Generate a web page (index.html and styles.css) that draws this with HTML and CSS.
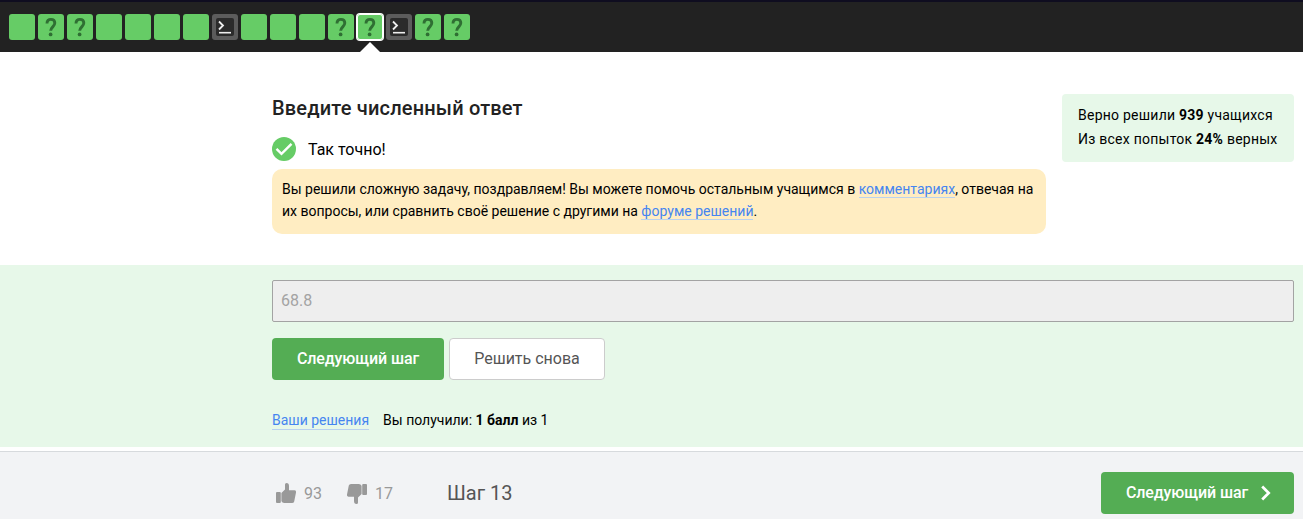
FILE: index.html
```html
<!DOCTYPE html>
<html lang="ru">
<head>
<meta charset="utf-8">
<title>Шаг 13</title>
<link rel="stylesheet" href="styles.css">
</head>
<body>
<svg class="defs" width="0" height="0" aria-hidden="true">
  <symbol id="quiz" viewBox="0 0 26 26"><path d="M9 9.400C9 6.700 10.500 5.400 12.900 5.400c2.500 0 3.900 1.400 3.900 3.700 0 3.500-4.100 4.100-4.100 7.700" fill="none" stroke="#2f6f33" stroke-width="2.900"/><circle cx="12.600" cy="20.400" r="1.850" fill="#2f6f33"/></symbol>
  <symbol id="term" viewBox="0 0 26 26"><rect x="4" y="4" width="18" height="18" rx="2" fill="#2b2b2b"/><path d="M7 7.500l4 4-4 4" fill="none" stroke="#eee" stroke-width="1.800"/><path d="M7 18.700h12" stroke="#eee" stroke-width="1.600"/></symbol>
  <symbol id="thumb" viewBox="0 0 20 20"><rect x="0" y="9" width="4.800" height="11" rx="1"/><path d="M5.400 10L9 6.500V1.500Q9 0 10.500 0Q13 .2 13 3V7.300H18.500Q20.300 7.500 20 9.500L18.200 18.500Q17.800 20 16 20H8Q5.600 19.700 5.400 18Z"/></symbol>
</svg>
<nav class="steps">
  <a class="step"></a>
  <a class="step"><svg><use href="#quiz"/></svg></a>
  <a class="step"><svg><use href="#quiz"/></svg></a>
  <a class="step"></a>
  <a class="step"></a>
  <a class="step"></a>
  <a class="step"></a>
  <a class="step code"><svg><use href="#term"/></svg></a>
  <a class="step"></a>
  <a class="step"></a>
  <a class="step"></a>
  <a class="step"><svg><use href="#quiz"/></svg></a>
  <a class="step active"><svg><use href="#quiz"/></svg></a>
  <a class="step code"><svg><use href="#term"/></svg></a>
  <a class="step"><svg><use href="#quiz"/></svg></a>
  <a class="step"><svg><use href="#quiz"/></svg></a>
</nav>
<main class="task">
  <section class="feedback">
    <h1 class="title">Введите численный ответ</h1>
    <div class="status">
      <svg width="24" height="24" viewBox="0 0 24 24"><circle cx="12" cy="12" r="12" fill="#66cc66"/><path d="M4.500 11.800l5 5L19.500 6.800" fill="none" stroke="#fff" stroke-width="2.400"/></svg>
      <span class="verdict">Так точно!</span>
    </div>
    <p class="hint"><span class="line">Вы решили сложную задачу, поздравляем! Вы можете помочь остальным учащимся в <a class="link">комментариях</a>, отвечая на</span> <span class="line">их вопросы, или сравнить своё решение с другими на <a class="link">форуме решений</a>.</span></p>
  </section>
  <aside class="stats">
    <div class="stat">Верно решили <b>939</b> учащихся</div>
    <div class="stat">Из всех попыток <b>24%</b> верных</div>
  </aside>
</main>
<section class="answer">
  <div class="field">68.8</div>
  <div class="actions">
    <button class="btn primary">Следующий шаг</button>
    <button class="btn again">Решить снова</button>
  </div>
  <div class="result"><a class="link">Ваши решения</a><span class="score">Вы получили: <b>1 балл</b> из 1</span></div>
</section>
<footer class="footer">
  <div class="vote up"><svg width="20" height="20"><use href="#thumb"/></svg><span>93</span></div>
  <div class="vote down"><svg width="20" height="20"><use href="#thumb"/></svg><span>17</span></div>
  <div class="position">Шаг 13</div>
  <button class="btn primary next"><span>Следующий шаг</span><svg width="10" height="16" viewBox="0 0 10 16"><path d="M1.200 1.500L7.700 8l-6.500 6.500" fill="none" stroke="#fff" stroke-width="2.700"/></svg></button>
</footer>
</body>
</html>
```
FILE: styles.css
```css
* { box-sizing: border-box; }
body {
  margin: 0;
  height: 519px;
  overflow: hidden;
  background: #fff;
  color: #000;
  font: 14px/24px Roboto, sans-serif;
}
.defs { display: block; }
.steps {
  display: flex;
  gap: 3px;
  height: 52px;
  padding: 12px 9px 0;
  background: #222;
  border-top: 2px solid #0f0d20;
}
.step {
  position: relative;
  width: 26px;
  height: 26px;
  border-radius: 3px;
  background: #66cc66;
}
.step svg { display: block; width: 26px; height: 26px; }
.code { background: #5c5c5c; }
.active { box-shadow: 0 0 0 1px #fff, inset 0 0 0 1px #fff; }
.active::after {
  content: "";
  position: absolute;
  left: 3px;
  top: 28px;
  border: 10px solid transparent;
  border-top: 0;
  border-bottom-color: #fff;
}
.task {
  display: flex;
  justify-content: space-between;
  height: 213px;
  padding: 42px 9px 0 272px;
}
.feedback { width: 774px; }
.title {
  margin: 0;
  font-size: 20px;
  font-weight: 500;
  line-height: 28px;
  letter-spacing: .18px;
  color: #222;
  white-space: nowrap;
}
.status { display: flex; align-items: center; gap: 12px; height: 24px; margin-top: 15px; }
.verdict { padding-top: 2px; font-size: 16px; }
.hint {
  height: 65px;
  margin: 8px 0 0;
  padding: 9px 10px;
  border-radius: 10px;
  background: #ffedc2;
  line-height: 22px;
}
.line { display: block; white-space: nowrap; }
.link { color: #4585f0; border-bottom: 1px solid #b9d2ee; }
b { font-weight: 700; }
.stats {
  width: 232px;
  height: 68px;
  padding: 9px 16px;
  border-radius: 4px;
  background: #e7f8e9;
  letter-spacing: .24px;
  white-space: nowrap;
}
.answer {
  height: 182px;
  padding: 15px 9px 0 272px;
  background: #e7f8e9;
}
.field {
  height: 42px;
  padding: 0 8px;
  border: 1px solid #a3a3a3;
  border-radius: 2px;
  background: #eee;
  color: #a3a3a3;
  font-size: 16px;
  line-height: 40px;
}
.actions { display: flex; gap: 5px; margin-top: 16px; }
.btn {
  display: flex;
  align-items: center;
  justify-content: center;
  height: 42px;
  padding: 0;
  border: 0;
  border-radius: 4px;
  font: 16px/24px Roboto, sans-serif;
  white-space: nowrap;
}
.primary { width: 172px; background: #54ad54; color: #fff; font-weight: 500; letter-spacing: -.1px; }
.again { width: 156px; border: 1px solid #ccc; background: #fff; color: #555; }
.result { display: flex; gap: 14px; margin-top: 32px; line-height: 16px; }
.result .link { height: 18px; }
.footer {
  display: flex;
  align-items: center;
  height: 68px;
  margin-top: 4px;
  padding: 15px 9px 1px 276px;
  border-top: 1px solid #d7dadd;
  background: #f2f3f5;
}
.vote { display: flex; align-items: center; gap: 8px; width: 71px; color: #999; font-size: 16px; }
.vote svg { fill: #999; }
.vote span { padding-top: 2px; }
.down svg { margin-top: 3px; transform: rotate(180deg); }
.position { margin-left: 29px; color: #555; font-size: 20px; }
.next { width: 193px; gap: 13px; margin-left: auto; padding-left: 2px; }
```
